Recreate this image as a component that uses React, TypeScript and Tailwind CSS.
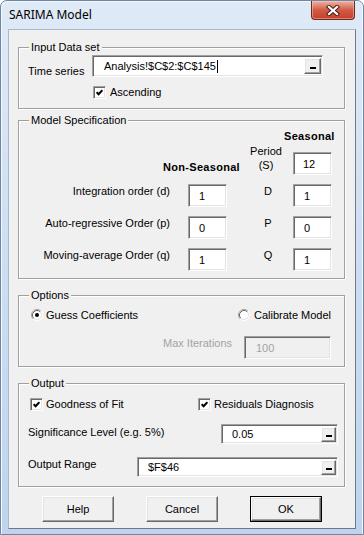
import React from "react";

const sunken =
  "border border-t-[#a0a0a0] border-l-[#a0a0a0] border-r-white border-b-white shadow-[inset_1px_1px_0_#696969,inset_-1px_-1px_0_#e3e3e3]";
const raised =
  "border border-t-white border-l-white border-r-[#696969] border-b-[#696969] shadow-[inset_-1px_-1px_0_#a0a0a0,inset_1px_1px_0_#e3e3e3] bg-[#f0f0f0]";

function RangeBtn({ size }: { size: string }) {
  return (
    <div className={`ml-auto mr-[1px] flex items-end justify-center pb-[4px] shrink-0 ${size} ${raised}`}>
      <div className="w-[6px] h-[2px] bg-black" />
    </div>
  );
}

function TextBox({
  size,
  text,
  disabled,
  btn,
  btnSize,
  cursor,
  pad,
}: {
  size: string;
  text: string;
  disabled?: boolean;
  btn?: boolean;
  btnSize?: string;
  cursor?: boolean;
  pad: string;
}) {
  return (
    <div
      className={`flex items-center shrink-0 ${size} ${sunken} ${
        disabled ? "bg-[#f0f0f0] text-[#a3a3a3]" : "bg-white text-black"
      }`}
    >
      <span className={`${pad} leading-[14px] whitespace-nowrap`}>{text}</span>
      {cursor && <span className="w-[1px] h-[13px] bg-black ml-[1px]" />}
      {btn && <RangeBtn size={btnSize || "w-[15px] h-[15px]"} />}
    </div>
  );
}

function Check() {
  return (
    <div className={`w-[13px] h-[13px] bg-white flex items-center justify-center shrink-0 ${sunken}`}>
      <svg width="7" height="7" viewBox="0 0 7 7">
        <polyline points="0.6,3.2 2.6,5.3 6.4,1.2" fill="none" stroke="#000" strokeWidth="2.1" />
      </svg>
    </div>
  );
}

function Radio({ on }: { on?: boolean }) {
  return (
    <svg width="12" height="12" viewBox="0 0 12 12" className="shrink-0">
      <circle cx="6" cy="6" r="4.5" fill="#fff" />
      <path d="M9.89 2.11 A5.5 5.5 0 0 0 2.11 9.89" fill="none" stroke="#a0a0a0" />
      <path d="M2.11 9.89 A5.5 5.5 0 0 0 9.89 2.11" fill="none" stroke="#ffffff" />
      <path d="M9.18 2.82 A4.5 4.5 0 0 0 2.82 9.18" fill="none" stroke="#696969" />
      <path d="M2.82 9.18 A4.5 4.5 0 0 0 9.18 2.82" fill="none" stroke="#e3e3e3" />
      {on && <circle cx="6" cy="6" r="2" fill="#000" />}
    </svg>
  );
}

function Group({ title, size, children }: { title: string; size: string; children: React.ReactNode }) {
  return (
    <div
      className={`relative ml-[9px] w-[327px] border border-[#a0a0a0] shadow-[1px_1px_0_#ffffff,inset_1px_1px_0_#ffffff] ${size}`}
    >
      <span className="absolute -top-[8px] left-[10px] px-[2px] bg-[#f0f0f0] leading-[14px] whitespace-nowrap">
        {title}
      </span>
      {children}
    </div>
  );
}

function Button({ label, def }: { label: string; def?: boolean }) {
  if (def) {
    return (
      <div className="w-[72px] h-[26px] border border-black">
        <div className={`w-full h-full flex items-center justify-center ${raised}`}>{label}</div>
      </div>
    );
  }
  return <div className={`w-[72px] h-[26px] flex items-center justify-center ${raised}`}>{label}</div>;
}

function SpecRow({ label, letter, a, b }: { label: string; letter: string; a: string; b: string }) {
  return (
    <div className="flex items-start mt-[9px]">
      <div className="w-[151px] text-right leading-[14px] whitespace-nowrap">{label}</div>
      <div className="ml-[18px]">
        <TextBox size="w-[39px] h-[23px]" text={a} pad="pl-[10px]" />
      </div>
      <div className="ml-[31px] w-[20px] text-center leading-[14px]">{letter}</div>
      <div className="ml-[15px]">
        <TextBox size="w-[39px] h-[23px]" text={b} pad="pl-[10px]" />
      </div>
    </div>
  );
}

export default function App() {
  return (
    <div className="w-[364px] h-[535px] flex flex-col px-[7px] pb-[5px] rounded-t-[7px] border border-[#6d86a6] bg-gradient-to-b from-[#dfeaf7] via-[#cddef1] to-[#bfd4ec] shadow-[inset_1px_1px_0_#f4f8fc,inset_-1px_0_0_#f4f8fc] font-['Liberation_Sans',Arial,sans-serif] text-[11px] text-black">
      {/* Title bar */}
      <div className="h-[28px] flex items-start justify-between shrink-0">
        <div className="self-center pl-[1px] font-['Noto_Sans',sans-serif] text-[12px] leading-[16px] text-black">
          SARIMA Model
        </div>
        <div className="mr-[1px] w-[44px] h-[19px] rounded-b-[4px] border border-t-0 border-[#6a2a22] bg-gradient-to-b from-[#ecb2a5] via-[#d25a45] to-[#c5412b] shadow-[inset_0_0_0_1px_rgba(255,210,200,0.45)] flex items-center justify-center">
          <svg width="14" height="11" viewBox="0 0 14 11">
            <path d="M3 2 L11 9 M11 2 L3 9" stroke="#4a1d18" strokeWidth="4.2" strokeLinecap="square" />
            <path d="M3 2 L11 9 M11 2 L3 9" stroke="#ffffff" strokeWidth="2.3" strokeLinecap="square" />
          </svg>
        </div>
      </div>

      {/* Client area */}
      <div className="flex-1 flex flex-col bg-[#f0f0f0] border border-t-[#a9b9cb] border-l-[#a9b9cb] border-r-[#6d7a89] border-b-[#6d7a89]">
        {/* Input Data set */}
        <div className="mt-[17px]">
          <Group title="Input Data set" size="h-[62px]">
            <div className="flex items-start pt-[7px] pl-[9px]">
              <div className="w-[64px] mt-[9px] leading-[14px] whitespace-nowrap">Time series</div>
              <TextBox
                size="w-[231px] h-[22px]"
                text="Analysis!$C$2:$C$145"
                pad="pl-[11px]"
                cursor
                btn
                btnSize="w-[17px] h-[16px]"
              />
            </div>
            <div className="flex items-center h-[14px] mt-[7px] ml-[74px]">
              <Check />
              <span className="ml-[4px] leading-[14px]">Ascending</span>
            </div>
          </Group>
        </div>

        {/* Model Specification */}
        <div className="mt-[11px]">
          <Group title="Model Specification" size="h-[159px]">
            <div className="pt-[8px] pl-[265px] font-bold tracking-[0.3px] leading-[14px]">Seasonal</div>
            <div className="flex items-start mt-[1px]">
              <div className="ml-[144px] w-[87px] mt-[16px] font-bold tracking-[0.3px] leading-[14px] whitespace-nowrap">
                Non-Seasonal
              </div>
              <div className="w-[32px] text-center leading-[14px]">
                <div>Period</div>
                <div>(S)</div>
              </div>
              <div className="ml-[11px] mt-[8px]">
                <TextBox size="w-[39px] h-[23px]" text="12" pad="pl-[9px]" />
              </div>
            </div>
            <SpecRow label="Integration order (d)" letter="D" a="1" b="1" />
            <SpecRow label="Auto-regressive Order (p)" letter="P" a="0" b="0" />
            <SpecRow label="Moving-average Order (q)" letter="Q" a="1" b="1" />
          </Group>
        </div>

        {/* Options */}
        <div className="mt-[16px]">
          <Group title="Options" size="h-[72px]">
            <div className="mt-[12px] h-[14px] ml-[12px] flex items-center">
              <div className="w-[207px] flex items-center">
                <Radio on />
                <span className="ml-[3px] leading-[14px]">Guess Coefficients</span>
              </div>
              <div className="flex items-center">
                <Radio />
                <span className="ml-[4px] leading-[14px]">Calibrate Model</span>
              </div>
            </div>
            <div className="flex items-start mt-[14px]">
              <div className="ml-[144px] w-[81px] leading-[14px] text-[#a3a3a3] whitespace-nowrap">Max Iterations</div>
              <TextBox size="w-[87px] h-[23px]" text="100" pad="pl-[11px]" disabled />
            </div>
          </Group>
        </div>

        {/* Output */}
        <div className="mt-[16px]">
          <Group title="Output" size="h-[104px]">
            <div className="mt-[13px] h-[14px] ml-[11px] flex items-center">
              <div className="w-[168px] flex items-center">
                <Check />
                <span className="ml-[3px] leading-[14px]">Goodness of Fit</span>
              </div>
              <div className="flex items-center">
                <Check />
                <span className="ml-[3px] leading-[14px]">Residuals Diagnosis</span>
              </div>
            </div>
            <div className="flex items-start mt-[13px]">
              <div className="ml-[9px] w-[193px] mt-[1px] leading-[14px] whitespace-nowrap">
                Significance Level (e.g. 5%)
              </div>
              <TextBox size="w-[117px] h-[20px]" text="0.05" pad="pl-[10px]" btn btnSize="w-[15px] h-[15px]" />
            </div>
            <div className="flex items-start mt-[13px]">
              <div className="ml-[9px] w-[109px] leading-[14px] whitespace-nowrap">Output Range</div>
              <TextBox size="w-[201px] h-[20px]" text="$F$46" pad="pl-[10px]" btn btnSize="w-[15px] h-[15px]" />
            </div>
          </Group>
        </div>

        {/* Buttons */}
        <div className="mt-[9px] ml-[33px] flex gap-[32px]">
          <Button label="Help" />
          <Button label="Cancel" />
          <Button label="OK" def />
        </div>
      </div>
    </div>
  );
}
